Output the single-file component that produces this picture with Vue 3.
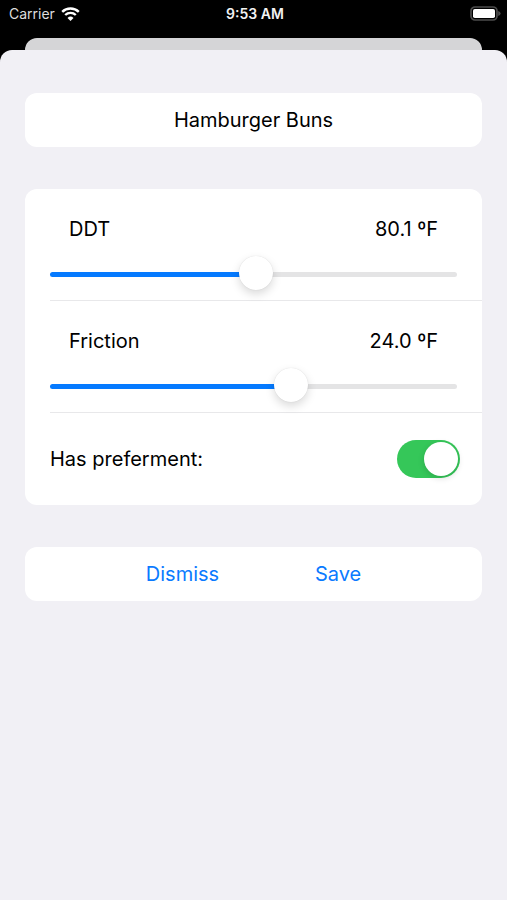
<template>
  <div class="screen">
    <header class="status-bar">
      <div class="carrier">
        <span>Carrier</span>
        <svg class="wifi" viewBox="0 0 19 14" aria-hidden="true">
          <path d="M1.2 4.9 A11.8 11.8 0 0 1 17.8 4.9" />
          <path d="M4.2 8 A7.6 7.6 0 0 1 14.8 8" />
          <path class="dot" d="M9.5 14 L6.5 11 A4.3 4.3 0 0 1 12.5 11 Z" />
        </svg>
      </div>
      <time>9:53 AM</time>
      <svg class="battery" viewBox="0 0 31 15" aria-hidden="true">
        <rect class="shell" x="1" y="1" width="26" height="13" rx="4" />
        <rect class="charge" x="3" y="3" width="22" height="9" rx="1.8" />
        <path class="cap" d="M28.2 5 Q30.6 5.8 30.6 7.5 Q30.6 9.2 28.2 10 Z" />
      </svg>
    </header>

    <div class="back-sheet"></div>

    <main class="sheet">
      <section class="card">
        <input v-model="name" class="name" type="text" aria-label="Name" />
      </section>

      <section class="card">
        <div v-for="item in sliders" :key="item.id" class="slider-row">
          <div class="slider-head">
            <label :for="item.id">{{ item.label }}</label>
            <output :for="item.id">{{ Number(item.value).toFixed(1) }} ºF</output>
          </div>
          <input
            :id="item.id"
            v-model="item.value"
            class="slider"
            type="range"
            :min="item.min"
            :max="item.max"
            step="0.1"
            :style="{ '--fill': fill(item) }"
          />
        </div>
        <div class="toggle-row">
          <label for="preferment">Has preferment:</label>
          <input id="preferment" v-model="hasPreferment" class="switch" type="checkbox" role="switch" />
        </div>
      </section>

      <section class="card actions">
        <button type="button">Dismiss</button>
        <button type="button">Save</button>
      </section>
    </main>
  </div>
</template>

<script setup>
import { ref } from 'vue'

const name = ref('Hamburger Buns')
const hasPreferment = ref(true)

const sliders = ref([
  { id: 'ddt', label: 'DDT', value: 80.1, min: 30, max: 129 },
  { id: 'friction', label: 'Friction', value: 24, min: 0, max: 40 },
])

const fill = (item) => (item.value - item.min) / (item.max - item.min)
</script>

<style>
body {
  margin: 0;
  background: #000;
}
</style>

<style scoped>
.screen {
  display: flex;
  flex-direction: column;
  min-height: 100vh;
  background: #000;
  color: #000;
  font-family: Inter, "Liberation Sans", sans-serif;
  font-size: 20px;
  line-height: 24px;
}

.status-bar {
  display: grid;
  grid-template-columns: 1fr auto 1fr;
  align-items: center;
  height: 27px;
  margin-bottom: 11px;
  padding: 0 6px 0 9px;
  color: #f2f2f2;
  font-size: 14px;
  line-height: 18px;
}

.status-bar time {
  font-weight: 600;
}

.carrier {
  display: flex;
  align-items: center;
  gap: 6px;
  color: #ddd;
}

.wifi {
  width: 19px;
  height: 14px;
  fill: none;
  stroke: #fff;
  stroke-width: 2.4;
}

.wifi .dot {
  fill: #fff;
  stroke: none;
}

.battery {
  justify-self: end;
  width: 31px;
  height: 15px;
}

.battery .shell {
  fill: none;
  stroke: #4c4c4c;
  stroke-width: 1.7;
}

.battery .charge {
  fill: #fff;
}

.battery .cap {
  fill: #4c4c4c;
}

.back-sheet {
  height: 12px;
  margin: 0 25px;
  border-radius: 12px 12px 0 0;
  background: #d5d5d7;
}

.sheet {
  display: flex;
  flex: 1;
  flex-direction: column;
  gap: 42px;
  padding: 43px 25px;
  border-radius: 12px 12px 0 0;
  background: #f1f0f5;
}

.card {
  overflow: hidden;
  border-radius: 12px;
  background: #fff;
}

.name {
  display: block;
  box-sizing: border-box;
  width: 100%;
  height: 54px;
  padding: 0 25px;
  border: 0;
  background: none;
  color: inherit;
  font: inherit;
  text-align: center;
}

.slider-row {
  margin-left: 25px;
  padding: 28px 25px 9px 0;
  border-bottom: 1px solid #e8e8ea;
}

.slider-head {
  display: flex;
  justify-content: space-between;
  padding: 0 19px;
}

.slider {
  --thumb: 34px;
  display: block;
  width: 100%;
  height: 34px;
  margin: 16px 0 0;
  appearance: none;
  background: none;
}

.slider::-webkit-slider-runnable-track {
  height: 5px;
  border-radius: 3px;
  background: linear-gradient(
    to right,
    #057aff calc(var(--thumb) / 2 + (100% - var(--thumb)) * var(--fill)),
    #e4e4e5 0
  );
}

.slider::-webkit-slider-thumb {
  width: var(--thumb);
  height: var(--thumb);
  margin-top: -16px;
  appearance: none;
  border-radius: 50%;
  background: #fff;
  box-shadow: 0 0 1px rgba(0, 0, 0, 0.15), 0 4px 10px rgba(0, 0, 0, 0.15);
}

.toggle-row {
  display: flex;
  align-items: center;
  justify-content: space-between;
  height: 92px;
  padding: 0 22px 0 25px;
}

.switch {
  display: flex;
  align-items: center;
  box-sizing: border-box;
  width: 63px;
  height: 38px;
  margin: 0;
  padding: 2px;
  appearance: none;
  border-radius: 19px;
  background: #e9e9ea;
}

.switch::before {
  width: 34px;
  height: 34px;
  border-radius: 50%;
  background: #fff;
  box-shadow: 0 2px 6px rgba(0, 0, 0, 0.15);
  content: "";
}

.switch:checked {
  justify-content: flex-end;
  background: #35c759;
}

.actions {
  display: flex;
  align-items: center;
  justify-content: space-evenly;
  height: 54px;
  padding: 0 25px;
}

.actions button {
  padding: 0;
  border: 0;
  background: none;
  color: #0a7aff;
  font: inherit;
}
</style>
